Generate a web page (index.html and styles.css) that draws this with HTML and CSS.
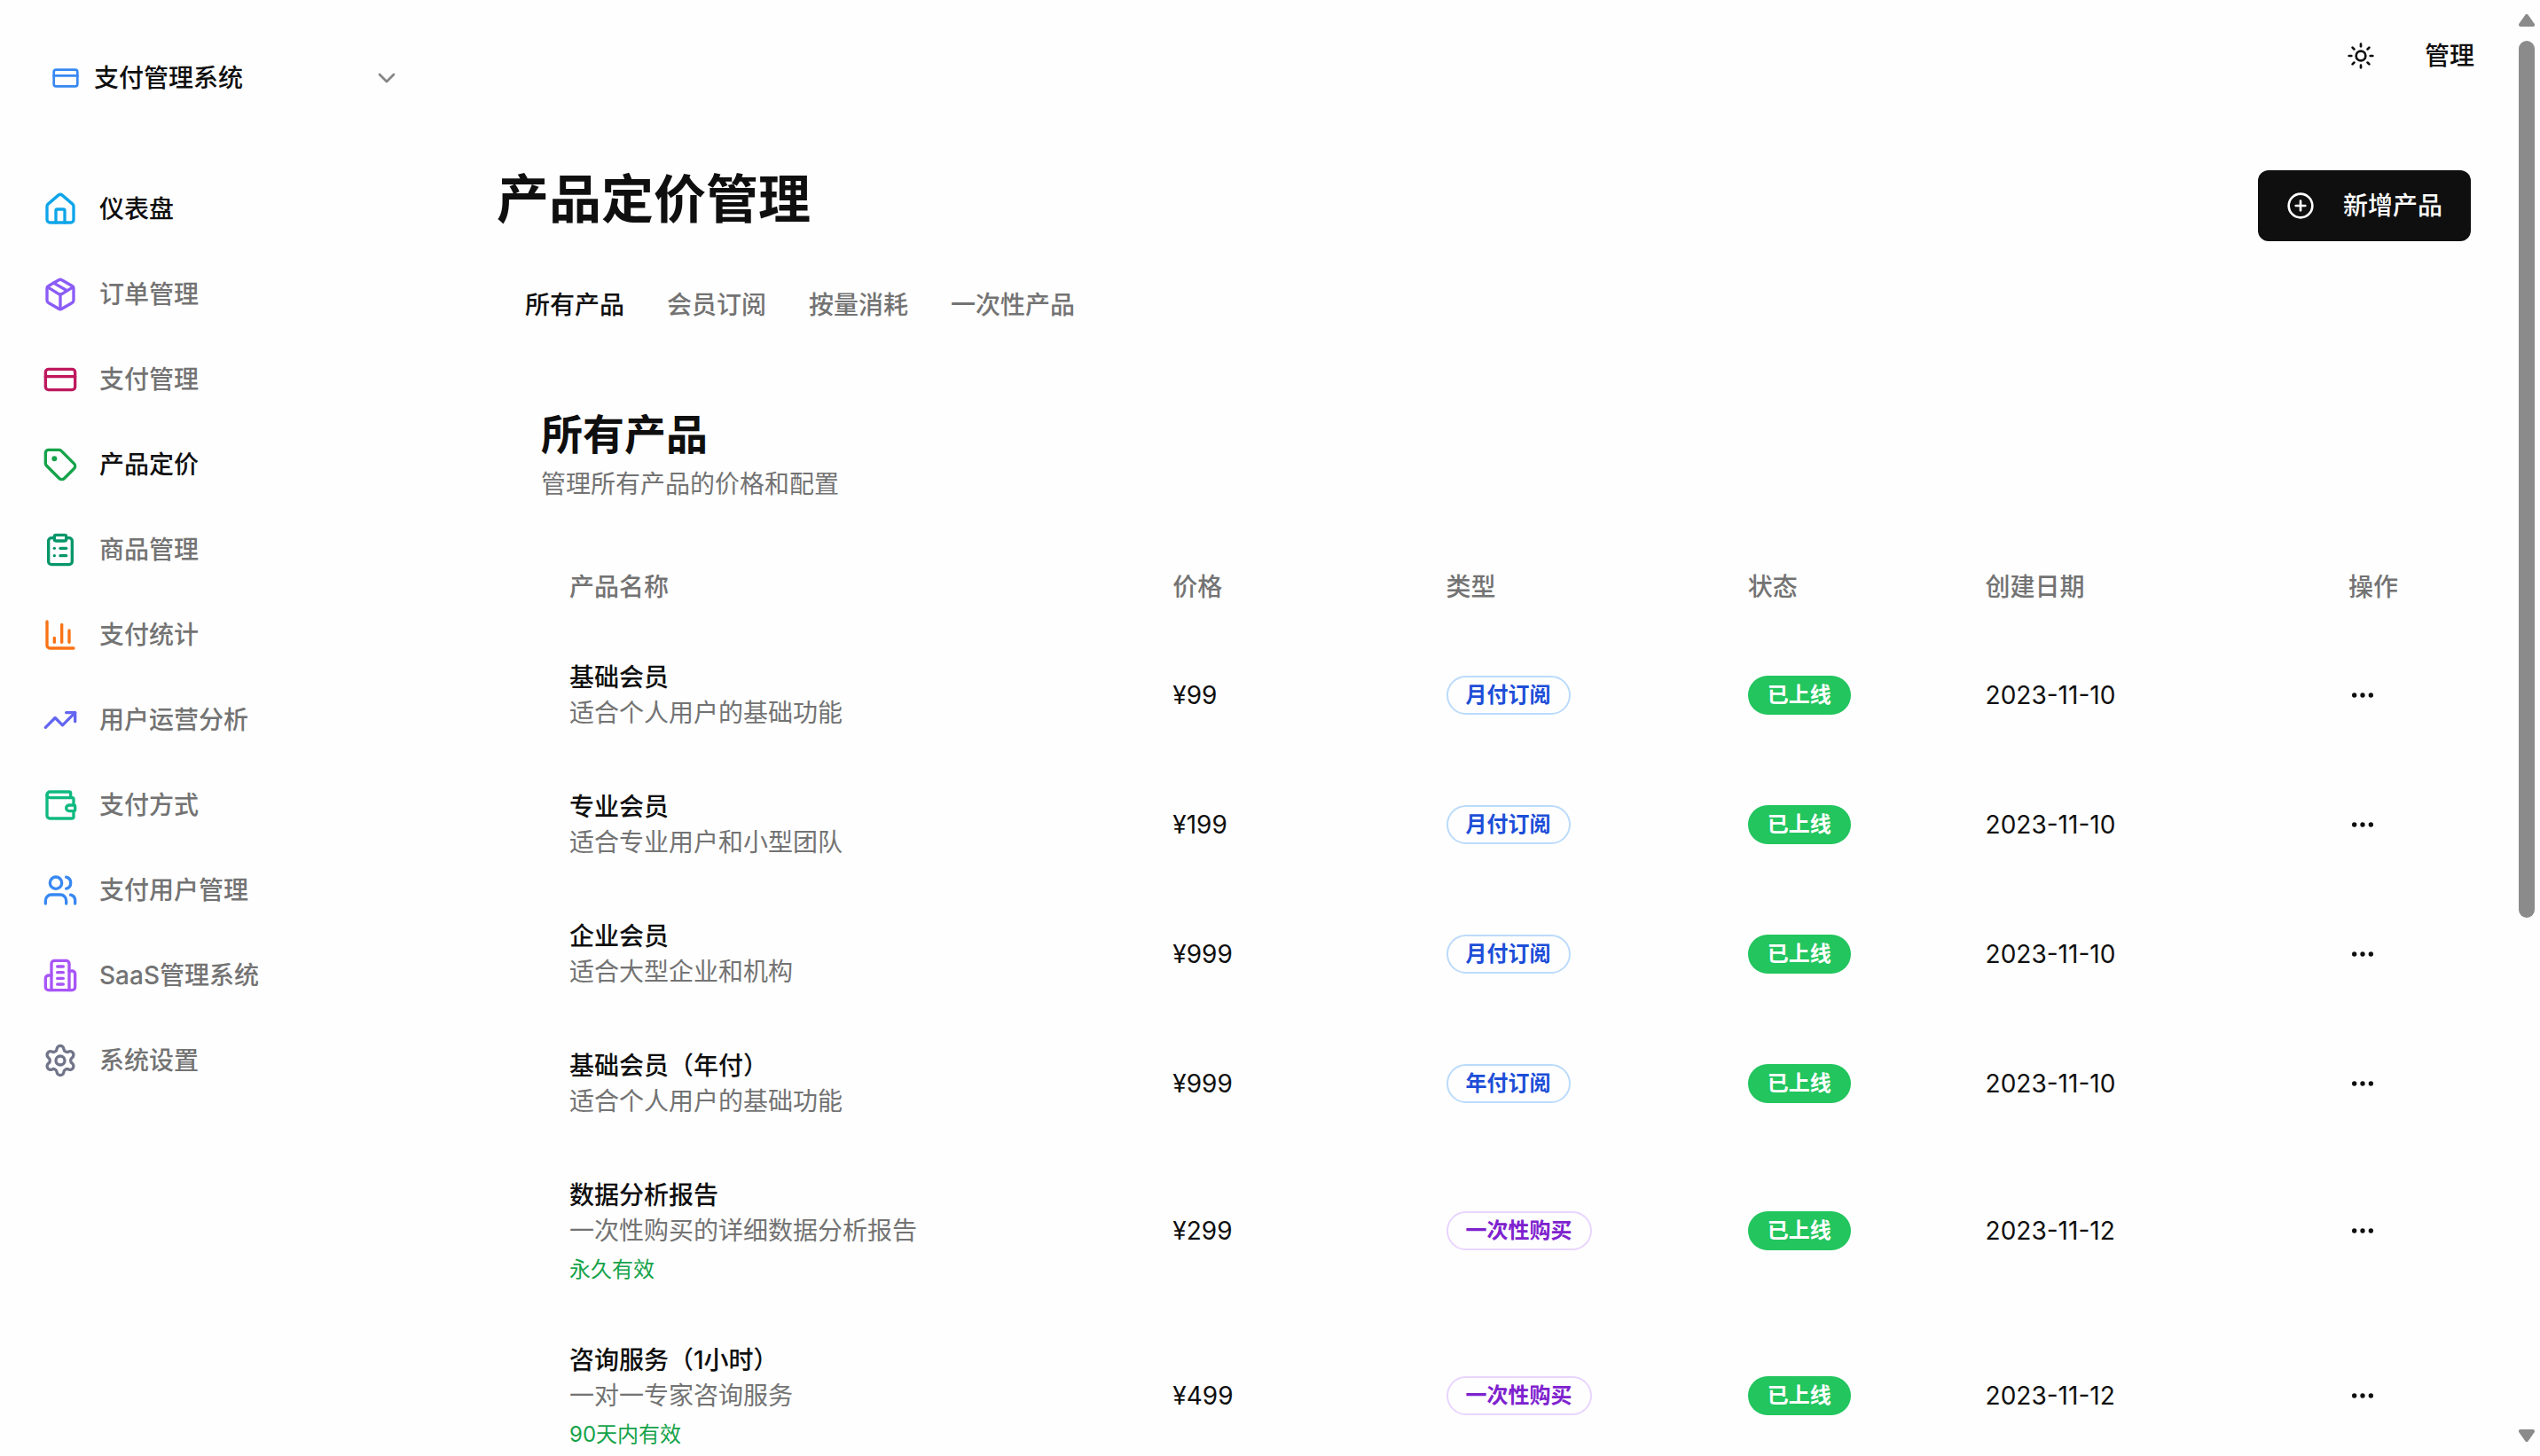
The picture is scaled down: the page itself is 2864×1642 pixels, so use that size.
FILE: index.html
```html
<!DOCTYPE html>
<html lang="zh-CN">
<head>
    <meta charset="UTF-8">
    <meta name="viewport" content="width=device-width, initial-scale=1.0">
    <title>产品定价管理</title>
    <link rel="stylesheet" href="styles.css">
</head>
<body>

<div class="layout">
    <aside class="sidebar">
        <button class="switcher" type="button">
            <svg class="icon-sm blue" viewBox="0 0 24 24"><rect width="20" height="14" x="2" y="5" rx="2"/><path d="M2 10h20"/></svg>
            <span>支付管理系统</span>
            <svg class="icon-sm chevron" viewBox="0 0 24 24"><path d="m6 9 6 6 6-6"/></svg>
        </button>
        <nav class="nav">
            <a href="#" class="active">
                <svg class="icon sky" viewBox="0 0 24 24"><path d="M15 21v-8a1 1 0 0 0-1-1h-4a1 1 0 0 0-1 1v8"/><path d="M3 10a2 2 0 0 1 .709-1.528l7-5.999a2 2 0 0 1 2.582 0l7 5.999A2 2 0 0 1 21 10v9a2 2 0 0 1-2 2H5a2 2 0 0 1-2-2z"/></svg>
                <span>仪表盘</span>
            </a>
            <a href="#">
                <svg class="icon violet" viewBox="0 0 24 24"><path d="M11 21.73a2 2 0 0 0 2 0l7-4A2 2 0 0 0 21 16V8a2 2 0 0 0-1-1.73l-7-4a2 2 0 0 0-2 0l-7 4A2 2 0 0 0 3 8v8a2 2 0 0 0 1 1.73z"/><path d="M12 22V12"/><path d="m3.3 7 7.703 4.734a2 2 0 0 0 1.994 0L20.7 7"/><path d="m7.5 4.27 9 5.15"/></svg>
                <span>订单管理</span>
            </a>
            <a href="#">
                <svg class="icon pink" viewBox="0 0 24 24"><rect width="20" height="14" x="2" y="5" rx="2"/><path d="M2 10h20"/></svg>
                <span>支付管理</span>
            </a>
            <a href="#" class="active">
                <svg class="icon green" viewBox="0 0 24 24"><path d="M12.586 2.586A2 2 0 0 0 11.172 2H4a2 2 0 0 0-2 2v7.172a2 2 0 0 0 .586 1.414l8.704 8.704a2.426 2.426 0 0 0 3.42 0l6.58-6.58a2.426 2.426 0 0 0 0-3.42z"/><circle class="dot" cx="8" cy="8" r=".8"/></svg>
                <span>产品定价</span>
            </a>
            <a href="#">
                <svg class="icon teal" viewBox="0 0 24 24"><rect width="8" height="4" x="8" y="2" rx="1"/><path d="M16 4h2a2 2 0 0 1 2 2v14a2 2 0 0 1-2 2H6a2 2 0 0 1-2-2V6a2 2 0 0 1 2-2h2"/><path d="M12 11h4"/><path d="M12 16h4"/><path d="M8 11h.01"/><path d="M8 16h.01"/></svg>
                <span>商品管理</span>
            </a>
            <a href="#">
                <svg class="icon orange" viewBox="0 0 24 24"><path d="M3 3v16a2 2 0 0 0 2 2h16"/><path d="M18 17V9"/><path d="M13 17V5"/><path d="M8 17v-3"/></svg>
                <span>支付统计</span>
            </a>
            <a href="#">
                <svg class="icon indigo" viewBox="0 0 24 24"><path d="m22 7-8.5 8.5-5-5L2 17"/><path d="M16 7h6v6"/></svg>
                <span>用户运营分析</span>
            </a>
            <a href="#">
                <svg class="icon emerald" viewBox="0 0 24 24"><path d="M19 7V4a1 1 0 0 0-1-1H5a2 2 0 0 0 0 4h15a1 1 0 0 1 1 1v4h-3a2 2 0 0 0 0 4h3a1 1 0 0 0 1-1v-2a1 1 0 0 0-1-1"/><path d="M3 5v14a2 2 0 0 0 2 2h15a1 1 0 0 0 1-1v-4"/></svg>
                <span>支付方式</span>
            </a>
            <a href="#">
                <svg class="icon blue" viewBox="0 0 24 24"><path d="M16 21v-2a4 4 0 0 0-4-4H6a4 4 0 0 0-4 4v2"/><circle cx="9" cy="7" r="4"/><path d="M22 21v-2a4 4 0 0 0-3-3.87"/><path d="M16 3.13a4 4 0 0 1 0 7.75"/></svg>
                <span>支付用户管理</span>
            </a>
            <a href="#">
                <svg class="icon purple" viewBox="0 0 24 24"><path d="M6 22V4a2 2 0 0 1 2-2h8a2 2 0 0 1 2 2v18Z"/><path d="M6 12H4a2 2 0 0 0-2 2v6a2 2 0 0 0 2 2h2"/><path d="M18 9h2a2 2 0 0 1 2 2v9a2 2 0 0 1-2 2h-2"/><path d="M10 6h4"/><path d="M10 10h4"/><path d="M10 14h4"/><path d="M10 18h4"/></svg>
                <span>SaaS管理系统</span>
            </a>
            <a href="#">
                <svg class="icon gray" viewBox="0 0 24 24"><path d="M9.671 4.136a2.34 2.34 0 0 1 4.659 0 2.34 2.34 0 0 0 3.319 1.915 2.34 2.34 0 0 1 2.33 4.033 2.34 2.34 0 0 0 0 3.831 2.34 2.34 0 0 1-2.33 4.033 2.34 2.34 0 0 0-3.319 1.915 2.34 2.34 0 0 1-4.659 0 2.34 2.34 0 0 0-3.32-1.915 2.34 2.34 0 0 1-2.33-4.033 2.34 2.34 0 0 0 0-3.831A2.34 2.34 0 0 1 6.35 6.051a2.34 2.34 0 0 0 3.319-1.915"/><circle cx="12" cy="12" r="3"/></svg>
                <span>系统设置</span>
            </a>
        </nav>
    </aside>

    <div class="page">
        <header class="topbar">
            <button class="theme-btn" type="button" aria-label="切换主题">
                <svg class="icon-sm" viewBox="0 0 24 24"><circle cx="12" cy="12" r="4"/><path d="M12 2v2"/><path d="M12 20v2"/><path d="m4.93 4.93 1.41 1.41"/><path d="m17.66 17.66 1.41 1.41"/><path d="M2 12h2"/><path d="M20 12h2"/><path d="m6.34 17.66-1.41 1.41"/><path d="m19.07 4.93-1.41 1.41"/></svg>
            </button>
            <button class="user-btn" type="button">管理</button>
        </header>

        <main class="content">
            <div class="page-head">
                <h1>产品定价管理</h1>
                <button class="add-btn" type="button">
                    <svg class="icon-sm" viewBox="0 0 24 24"><circle cx="12" cy="12" r="10"/><path d="M8 12h8"/><path d="M12 8v8"/></svg>
                    新增产品
                </button>
            </div>

            <div class="tabs" role="tablist">
                <button type="button" role="tab" aria-selected="true" class="active">所有产品</button>
                <button type="button" role="tab" aria-selected="false">会员订阅</button>
                <button type="button" role="tab" aria-selected="false">按量消耗</button>
                <button type="button" role="tab" aria-selected="false">一次性产品</button>
            </div>

            <section class="card">
                <h2>所有产品</h2>
                <p class="card-desc">管理所有产品的价格和配置</p>
                <table class="products">
                    <colgroup>
                        <col class="col-name">
                        <col class="col-price">
                        <col class="col-type">
                        <col class="col-status">
                        <col class="col-date">
                        <col class="col-action">
                    </colgroup>
                    <thead>
                        <tr>
                            <th>产品名称</th>
                            <th>价格</th>
                            <th>类型</th>
                            <th>状态</th>
                            <th>创建日期</th>
                            <th>操作</th>
                        </tr>
                    </thead>
                    <tbody>
                        <tr>
                            <td><div class="name">基础会员</div><div class="desc">适合个人用户的基础功能</div></td>
                            <td>¥99</td>
                            <td><span class="badge sub">月付订阅</span></td>
                            <td><span class="badge online">已上线</span></td>
                            <td>2023-11-10</td>
                            <td><button class="more" type="button" aria-label="更多操作"><svg class="icon-sm" viewBox="0 0 24 24"><circle cx="12" cy="12" r="1"/><circle cx="19" cy="12" r="1"/><circle cx="5" cy="12" r="1"/></svg></button></td>
                        </tr>
                        <tr>
                            <td><div class="name">专业会员</div><div class="desc">适合专业用户和小型团队</div></td>
                            <td>¥199</td>
                            <td><span class="badge sub">月付订阅</span></td>
                            <td><span class="badge online">已上线</span></td>
                            <td>2023-11-10</td>
                            <td><button class="more" type="button" aria-label="更多操作"><svg class="icon-sm" viewBox="0 0 24 24"><circle cx="12" cy="12" r="1"/><circle cx="19" cy="12" r="1"/><circle cx="5" cy="12" r="1"/></svg></button></td>
                        </tr>
                        <tr>
                            <td><div class="name">企业会员</div><div class="desc">适合大型企业和机构</div></td>
                            <td>¥999</td>
                            <td><span class="badge sub">月付订阅</span></td>
                            <td><span class="badge online">已上线</span></td>
                            <td>2023-11-10</td>
                            <td><button class="more" type="button" aria-label="更多操作"><svg class="icon-sm" viewBox="0 0 24 24"><circle cx="12" cy="12" r="1"/><circle cx="19" cy="12" r="1"/><circle cx="5" cy="12" r="1"/></svg></button></td>
                        </tr>
                        <tr>
                            <td><div class="name">基础会员（年付）</div><div class="desc">适合个人用户的基础功能</div></td>
                            <td>¥999</td>
                            <td><span class="badge sub">年付订阅</span></td>
                            <td><span class="badge online">已上线</span></td>
                            <td>2023-11-10</td>
                            <td><button class="more" type="button" aria-label="更多操作"><svg class="icon-sm" viewBox="0 0 24 24"><circle cx="12" cy="12" r="1"/><circle cx="19" cy="12" r="1"/><circle cx="5" cy="12" r="1"/></svg></button></td>
                        </tr>
                        <tr>
                            <td><div class="name">数据分析报告</div><div class="desc">一次性购买的详细数据分析报告</div><div class="valid">永久有效</div></td>
                            <td>¥299</td>
                            <td><span class="badge once">一次性购买</span></td>
                            <td><span class="badge online">已上线</span></td>
                            <td>2023-11-12</td>
                            <td><button class="more" type="button" aria-label="更多操作"><svg class="icon-sm" viewBox="0 0 24 24"><circle cx="12" cy="12" r="1"/><circle cx="19" cy="12" r="1"/><circle cx="5" cy="12" r="1"/></svg></button></td>
                        </tr>
                        <tr>
                            <td><div class="name">咨询服务（1小时）</div><div class="desc">一对一专家咨询服务</div><div class="valid">90天内有效</div></td>
                            <td>¥499</td>
                            <td><span class="badge once">一次性购买</span></td>
                            <td><span class="badge online">已上线</span></td>
                            <td>2023-11-12</td>
                            <td><button class="more" type="button" aria-label="更多操作"><svg class="icon-sm" viewBox="0 0 24 24"><circle cx="12" cy="12" r="1"/><circle cx="19" cy="12" r="1"/><circle cx="5" cy="12" r="1"/></svg></button></td>
                        </tr>
                    </tbody>
                </table>
            </section>
        </main>
    </div>

    <div class="scrollbar" aria-hidden="true">
        <svg class="arrow" viewBox="0 0 18 14"><path d="M9 2 16 12H2z"/></svg>
        <div class="track"><div class="thumb"></div></div>
        <svg class="arrow" viewBox="0 0 18 14"><path d="M9 12 2 2h14z"/></svg>
    </div>
</div>

</body>
</html>
```

FILE: styles.css
```css
* {
    box-sizing: border-box;
}
body {
    margin: 0;
    font-family: Inter, "Noto Sans CJK SC", sans-serif;
    font-size: 28px;
    line-height: 40px;
    color: #0f0f0f;
    background-color: #fefefe;
}
h1, h2, p {
    margin: 0;
}
button {
    padding: 0;
    border: none;
    background: none;
    font: inherit;
    color: inherit;
    cursor: pointer;
}
.layout {
    display: flex;
    height: 100vh;
    overflow: hidden;
}

/* Icons */
.icon, .icon-sm {
    flex: none;
    fill: none;
    stroke: currentColor;
    stroke-width: 2;
    stroke-linecap: round;
    stroke-linejoin: round;
}
.icon {
    width: 40px;
    height: 40px;
}
.icon-sm {
    width: 32px;
    height: 32px;
}
.dot {
    fill: currentColor;
}
.sky { color: #0ea5e9; }
.violet { color: #8b5cf6; }
.pink { color: #be185d; }
.green { color: #16a34a; }
.teal { color: #059669; }
.orange { color: #f97316; }
.indigo { color: #6366f1; }
.emerald { color: #10b981; }
.blue { color: #3888f2; }
.purple { color: #a855f7; }
.gray { color: #71758a; }

/* Sidebar */
.sidebar {
    flex: none;
    width: 512px;
    padding: 48px 32px;
}
.switcher {
    display: flex;
    align-items: center;
    gap: 16px;
    width: 100%;
    height: 80px;
    padding: 0 28px 0 26px;
    font-weight: 500;
}
.chevron {
    margin-left: auto;
    opacity: 0.5;
}
.nav {
    display: flex;
    flex-direction: column;
    gap: 16px;
    margin-top: 68px;
}
.nav a {
    display: flex;
    align-items: center;
    gap: 24px;
    height: 80px;
    padding: 0 16px;
    font-weight: 500;
    color: #737373;
    text-decoration: none;
}
.nav a.active {
    color: #0f0f0f;
}

/* Top bar */
.page {
    flex: 1;
    min-width: 0;
}
.topbar {
    display: flex;
    justify-content: flex-end;
    align-items: center;
    height: 126px;
    padding-right: 12px;
}
.theme-btn {
    display: flex;
    align-items: center;
    justify-content: center;
    width: 80px;
    height: 80px;
}
.user-btn {
    height: 80px;
    padding: 0 32px;
    font-weight: 500;
}

/* Page content */
.content {
    padding: 66px 48px;
}
.page-head {
    display: flex;
    justify-content: space-between;
    align-items: flex-start;
}
h1 {
    font-size: 59px;
    line-height: 66px;
    font-weight: 700;
}
.add-btn {
    display: flex;
    align-items: center;
    gap: 32px;
    height: 80px;
    padding: 0 32px;
    border-radius: 12px;
    background-color: #0f0f0f;
    color: #fefefe;
    font-weight: 500;
}
.tabs {
    display: flex;
    height: 80px;
    margin-top: 32px;
    padding: 8px;
}
.tabs button {
    padding: 0 24px;
    font-weight: 500;
    color: #737373;
}
.tabs button.active {
    color: #0f0f0f;
}
.card {
    margin-top: 32px;
    padding: 50px;
}
h2 {
    font-size: 47px;
    line-height: 48px;
    font-weight: 600;
}
.card-desc {
    margin-top: 12px;
    color: #737373;
}

/* Product table */
.products {
    width: 100%;
    margin-top: 48px;
    border-collapse: collapse;
    table-layout: fixed;
}
.col-name { width: 32%; }
.col-price { width: 14.5%; }
.col-type { width: 16%; }
.col-status { width: 12.6%; }
.col-action { width: 120px; }
.products th {
    height: 97px;
    padding: 0 32px;
    text-align: left;
    font-weight: 500;
    color: #737373;
    border-bottom: 2px solid transparent;
}
.products td {
    padding: 32px;
    border-bottom: 2px solid transparent;
    vertical-align: middle;
}
.name {
    font-weight: 500;
}
.desc {
    color: #737373;
}
.valid {
    margin-top: 8px;
    font-size: 24px;
    line-height: 32px;
    color: #16a34a;
}
.badge {
    display: inline-flex;
    padding: 4px 20px;
    border: 2px solid transparent;
    border-radius: 22px;
    font-size: 24px;
    line-height: 32px;
    font-weight: 600;
    vertical-align: middle;
}
.badge.sub {
    border-color: #bbdbfb;
    color: #1d4ed8;
}
.badge.once {
    border-color: #e9d5ff;
    color: #7e22ce;
}
.badge.online {
    background-color: #22c55e;
    color: #fefefe;
}
.more {
    display: flex;
}

/* Scrollbar */
.scrollbar {
    display: flex;
    flex-direction: column;
    flex: none;
    gap: 16px;
    width: 30px;
    padding: 16px 6px;
}
.arrow {
    width: 18px;
    height: 14px;
    fill: #8b8b8b;
    stroke: #8b8b8b;
    stroke-width: 4;
    stroke-linejoin: round;
}
.track {
    flex: 1;
}
.thumb {
    height: 63.8%;
    border-radius: 9px;
    background-color: #8b8b8b;
}
```
